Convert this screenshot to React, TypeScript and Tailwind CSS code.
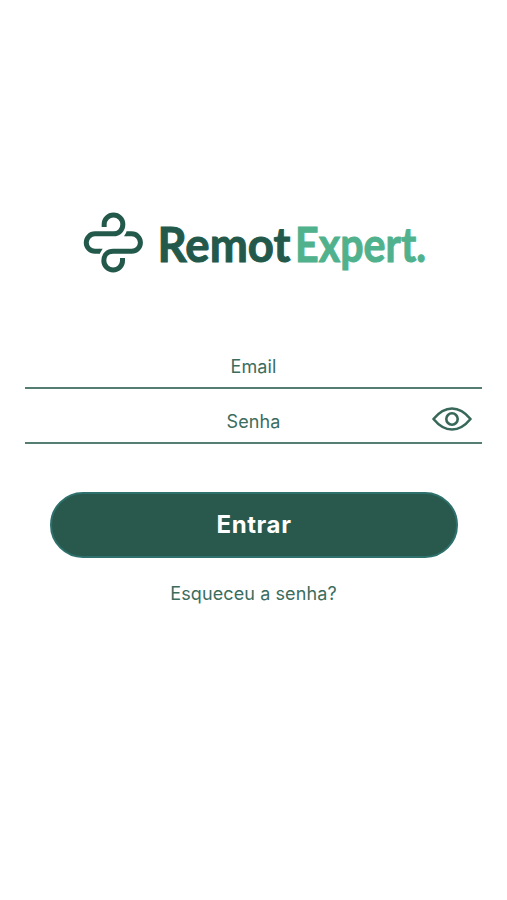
import React from 'react';

function LogoMark() {
  return (
    <svg className="w-20 h-[75px] shrink-0" viewBox="0 0 240 225" fill="none" stroke="#23594a" strokeWidth="15">
      <path d="M87.500 66V58a28 28 0 0 1 56 0c0 17-12 28.500-28 28.500H60a26.250 26.250 0 0 0 0 52.500H75" />
      <path d="M142.500 159V167a28 28 0 0 1-56 0c0-17 12-28 28-28H170a26.250 26.250 0 0 0 0-52.500H155" />
      <path d="M74 131.500H83L74 146.500ZM156 94H147L156 79Z" fill="#23594a" stroke="none" />
    </svg>
  );
}

function Wordmark() {
  return (
    <svg
      className="w-[275px] h-[75px] shrink-0 overflow-visible font-['Lato',sans-serif] text-[48px] leading-none font-bold"
      viewBox="155 205 275 75"
      strokeWidth="1"
    >
      <text x="157.500" y="262" textLength="133" lengthAdjust="spacingAndGlyphs" fill="#23594a" stroke="#23594a">
        Remot
      </text>
      <text x="295" y="262" textLength="131" lengthAdjust="spacingAndGlyphs" fill="#50b18d" stroke="#50b18d">
        Expert.
      </text>
    </svg>
  );
}

function EyeIcon() {
  return (
    <svg className="w-10 h-6" viewBox="0 0 40 24" fill="none" stroke="#37685a" strokeWidth="2.600" strokeLinejoin="round">
      <path d="M1.500 12C6 6.500 12 1.500 20 1.500S34 6.500 38.500 12C34 17.500 28 22.500 20 22.500S6 17.500 1.500 12Z" />
      <circle cx="20" cy="12" r="5.700" />
    </svg>
  );
}

export default function App() {
  const [showPassword, setShowPassword] = React.useState(false);

  const inputStyle =
    'w-full h-full bg-transparent text-center text-[18px] tracking-[0.1px] text-[#3b6d5e] placeholder:text-[#3b6d5e] placeholder:opacity-100 focus:outline-none';

  return (
    <div className="min-h-screen bg-white pt-[205px] font-['Inter',sans-serif]">
      {/* Logo */}
      <h1 className="flex pl-[75px]">
        <LogoMark />
        <Wordmark />
      </h1>

      <form className="flex flex-col" onSubmit={e => e.preventDefault()}>
        <div className="mt-[65px] ml-[25px] w-[457px] h-11 border-b-2 border-[#547e71]">
          <input type="email" placeholder="Email" className={inputStyle} />
        </div>

        <div className="relative mt-[11px] ml-[25px] w-[457px] h-11 border-b-2 border-[#547e71]">
          <input type={showPassword ? 'text' : 'password'} placeholder="Senha" className={inputStyle} />
          <button
            type="button"
            aria-label="Mostrar senha"
            onClick={() => setShowPassword(!showPassword)}
            className="absolute right-[10px] top-[7px]"
          >
            <EyeIcon />
          </button>
        </div>

        <button
          type="submit"
          className="mt-12 ml-[50px] w-[408px] h-[66px] rounded-full border-2 border-[#2d706c] bg-[#29594d] text-white text-[24px] tracking-[0.6px] font-bold"
        >
          Entrar
        </button>

        <a href="#" className="mt-[22px] self-center text-[18px] leading-7 tracking-[0.1px] text-[#3b6d5e]">
          Esqueceu a senha?
        </a>
      </form>
    </div>
  );
}
